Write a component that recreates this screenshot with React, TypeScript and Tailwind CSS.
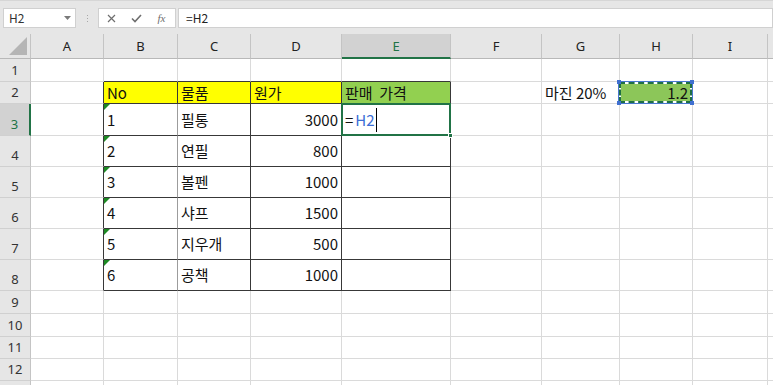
import React from 'react'

const COLS = ['A', 'B', 'C', 'D', 'E', 'F', 'G', 'H', 'I', '']

const ITEMS: [string, string, string][] = [
  ['1', '필통', '3000'],
  ['2', '연필', '800'],
  ['3', '볼펜', '1000'],
  ['4', '샤프', '1500'],
  ['5', '지우개', '500'],
  ['6', '공책', '1000'],
]

const ROW_COUNT = 13

function borderClasses(r: number, ci: number) {
  // ci: 0 = A ... 9 = J
  let right = 'border-r-[#dadada]'
  if (r >= 2 && r <= 8 && ci <= 4) right = 'border-r-[#383838]'
  if (r >= 3 && r <= 8 && ci === 1) right = 'border-r-[#9c9c9c]'
  let bottom = 'border-b-[#dadada]'
  if (r >= 1 && r <= 8 && ci >= 1 && ci <= 4) bottom = 'border-b-[#383838]'
  return `${right} ${bottom}`
}

function Cell({ r, ci }: { r: number; ci: number }) {
  let bg = 'bg-white'
  let content: React.ReactNode = null
  let align = 'justify-start'

  if (r === 2) {
    if (ci >= 1 && ci <= 3) bg = 'bg-[#ffff00]'
    if (ci === 4) bg = 'bg-[#92d050]'
    if (ci === 1) content = 'No'
    if (ci === 2) content = '물품'
    if (ci === 3) content = '원가'
    if (ci === 4) content = <span className="whitespace-pre">판매  가격</span>
    if (ci === 6) content = '마진 20%'
    if (ci === 7) {
      align = 'justify-end'
      content = (
        <>
          {/* copy / reference highlight around H2 */}
          <div className="absolute -left-[2px] -top-[1px] -right-[1px] -bottom-[1px] z-10 border border-[#4a78d0]">
            <div className="h-full w-full border-2 border-dashed border-[#1f6f43] bg-white">
              <div className="h-full w-full bg-[#8cc659]" />
            </div>
            <span className="absolute -left-[2px] -top-[2px] h-[4px] w-[4px] bg-[#3f6fd0]" />
            <span className="absolute -right-[2px] -top-[2px] h-[4px] w-[4px] bg-[#3f6fd0]" />
            <span className="absolute -left-[2px] -bottom-[2px] h-[4px] w-[4px] bg-[#3f6fd0]" />
            <span className="absolute -right-[2px] -bottom-[2px] h-[4px] w-[4px] bg-[#3f6fd0]" />
          </div>
          <span className="relative z-20 pr-[1px]">1.2</span>
        </>
      )
    }
  }

  if (r >= 3 && r <= 8) {
    const item = ITEMS[r - 3]
    if (ci === 1) {
      content = (
        <>
          <span className="absolute left-0 top-0 h-0 w-0 border-t-[6px] border-r-[6px] border-t-[#1d8a24] border-r-transparent" />
          {item[0]}
        </>
      )
    }
    if (ci === 2) content = item[1]
    if (ci === 3) {
      align = 'justify-end'
      content = item[2]
    }
    if (ci === 4 && r === 3) {
      content = (
        <>
          <span>=</span>
          <span className="ml-[2px] text-[#3c6ed6]">H2</span>
          <span className="ml-[1px] h-[24px] w-px bg-black" />
          <div className="absolute -left-[1px] -top-[1px] -right-[1px] -bottom-[1px] z-10 border-2 border-[#217346]">
            <span className="absolute -right-[4px] -bottom-[4px] h-[5px] w-[5px] border border-white bg-[#217346]" />
          </div>
        </>
      )
    }
  }

  return (
    <div
      className={`relative flex items-center border-r border-b px-[3px] text-[15px] leading-[20px] text-[#111] whitespace-nowrap ${align} ${bg} ${borderClasses(r, ci)}`}
    >
      {content}
    </div>
  )
}

function FormulaBar() {
  return (
    <div className="flex h-[34px] items-start border-t border-t-[#d6d6d6] bg-[#e6e6e6] pl-[3px] pt-[7px]">
      <div className="flex h-[20px] w-[73px] items-center justify-between border border-[#d0d0d0] bg-white pl-[5px] pr-[4px] text-[12px] text-[#333]">
        <span>H2</span>
        <svg width="7" height="4" viewBox="0 0 7 4">
          <path d="M0 0 L7 0 L3.5 4 Z" fill="#7a7a7a" />
        </svg>
      </div>
      <div className="flex h-[20px] w-[22px] flex-col items-center justify-center gap-[2px]">
        <span className="h-[1px] w-[1px] bg-[#a8a8a8]" />
        <span className="h-[1px] w-[1px] bg-[#a8a8a8]" />
        <span className="h-[1px] w-[1px] bg-[#a8a8a8]" />
      </div>
      <div className="flex h-[20px] w-[78px] items-center border border-[#d0d0d0] bg-white">
        <div className="flex w-[25px] justify-center">
          <svg width="9" height="9" viewBox="0 0 9 9">
            <path d="M1 1 L8 8 M8 1 L1 8" stroke="#6e6e6e" strokeWidth="1.2" />
          </svg>
        </div>
        <div className="flex w-[25px] justify-center">
          <svg width="11" height="9" viewBox="0 0 11 9">
            <path d="M1 4.5 L4 7.5 L10 1" stroke="#6e6e6e" strokeWidth="1.6" fill="none" />
          </svg>
        </div>
        <div className="flex w-[25px] justify-center font-['Liberation_Serif',serif] text-[11px] italic leading-none text-[#6e6e6e]">
          fx
        </div>
      </div>
      <div className="ml-[2px] flex h-[20px] flex-1 items-center border border-[#d0d0d0] bg-white pl-[7px] text-[12px] text-[#222]">
        =H2
      </div>
    </div>
  )
}

export default function App() {
  const rows = Array.from({ length: ROW_COUNT }, (_, i) => i + 1)
  return (
    <div className="h-[385px] w-[773px] overflow-hidden bg-white font-['Noto_Sans_CJK_KR','Noto_Sans',sans-serif]">
      <FormulaBar />
      <div className="grid grid-cols-[31px_73px_74px_73px_91px_109px_91px_78px_73px_75px_1fr] grid-rows-[25px_23px_22px_32px_31px_31px_31px_31px_31px_23px_23px_22px_22px_22px]">
        {/* corner */}
        <div className="relative border-r border-b border-r-[#c4c4c4] border-b-[#b8b8b8] bg-[#e6e6e6]">
          <span className="absolute bottom-[3px] right-[3px] h-0 w-0 border-b-[18px] border-l-[18px] border-b-[#b5b5b5] border-l-transparent" />
        </div>
        {COLS.map((c, i) =>
          i === 4 ? (
            <div
              key={c}
              className="flex items-center justify-center border-r border-b-2 border-r-[#c4c4c4] border-b-[#217346] bg-[#d2d2d2] pt-[2px] font-['Noto_Sans',sans-serif] text-[13px] text-[#217346]"
            >
              {c}
            </div>
          ) : (
            <div
              key={c || 'J'}
              className="flex items-center justify-center border-r border-b border-r-[#c4c4c4] border-b-[#b8b8b8] bg-[#e6e6e6] pt-[2px] font-['Noto_Sans',sans-serif] text-[13px] text-[#222]"
            >
              {c}
            </div>
          )
        )}
        {rows.map(r => (
          <React.Fragment key={r}>
            {r === 3 ? (
              <div className="flex items-end justify-center border-r-2 border-b border-r-[#217346] border-b-[#d0d0d0] bg-[#d2d2d2] pb-[3px] font-['Noto_Sans',sans-serif] text-[13px] leading-[16px] text-[#217346]">
                {r}
              </div>
            ) : (
              <div className="flex items-end justify-center border-r border-b border-r-[#c4c4c4] border-b-[#d0d0d0] bg-[#e6e6e6] pb-[3px] font-['Noto_Sans',sans-serif] text-[13px] leading-[16px] text-[#333]">
                {r < ROW_COUNT ? r : null}
              </div>
            )}
            {COLS.map((_, ci) => (
              <Cell key={ci} r={r} ci={ci} />
            ))}
          </React.Fragment>
        ))}
      </div>
    </div>
  )
}
